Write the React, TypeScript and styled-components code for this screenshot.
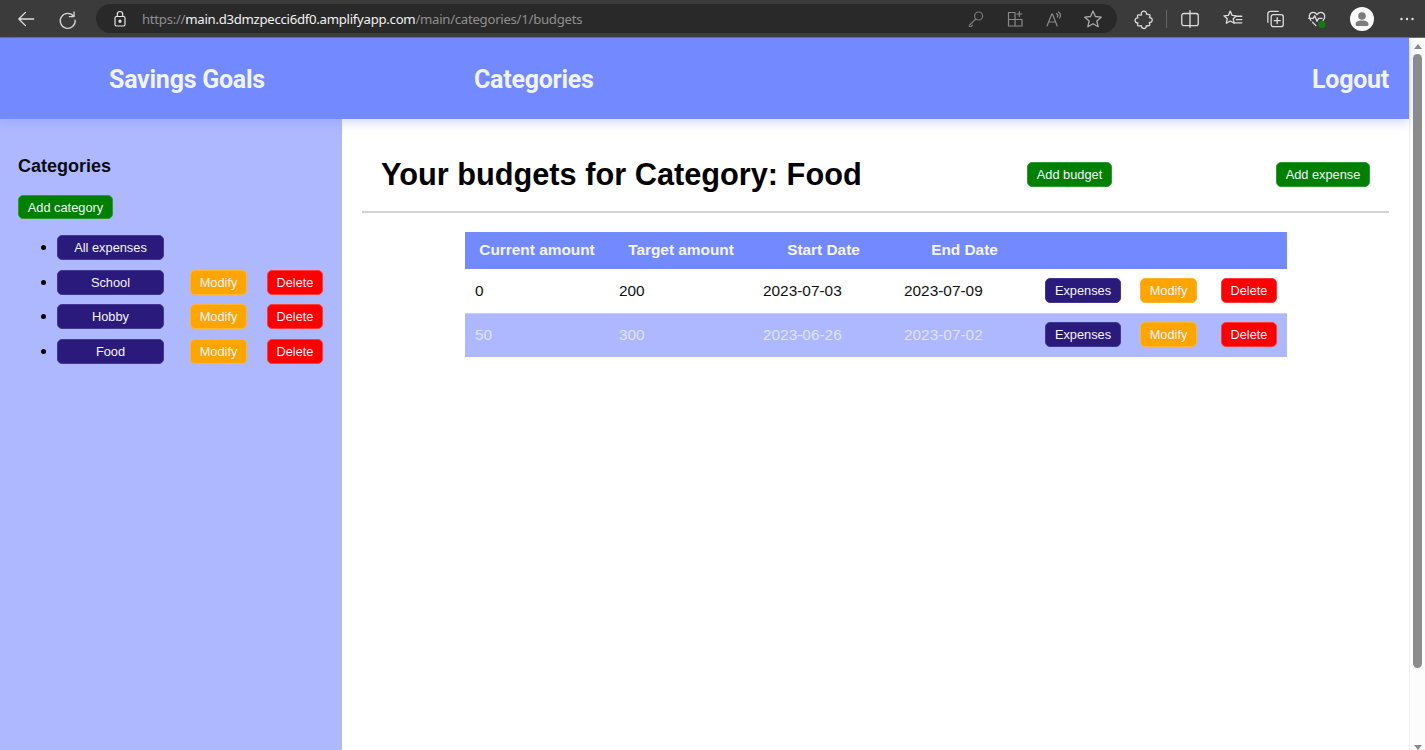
import React from 'react';
import styled, { createGlobalStyle } from 'styled-components';

const GlobalStyle = createGlobalStyle`
  html, body {
    margin: 0;
    height: 100%;
    overflow: hidden;
    background: #fff;
    font-family: "Liberation Sans", Arial, sans-serif;
  }
  #root {
    height: 100%;
  }
`;

const Window = styled.div`
  height: 750px;
  display: flex;
  flex-direction: column;
`;

const BrowserBar = styled.div`
  height: 37px;
  flex: none;
  display: flex;
  align-items: center;
  background: #3b3b3b;
  border-bottom: 1px solid #6b6b6b;
  box-sizing: content-box;
`;

const IconSlot = styled.span<{ $left?: number }>`
  width: 24px;
  height: 24px;
  flex: none;
  display: flex;
  align-items: center;
  justify-content: center;
  margin-left: ${({ $left }) => $left ?? 0}px;
  svg {
    display: block;
  }
`;

const UrlPill = styled.div`
  width: 1021px;
  height: 29px;
  flex: none;
  margin-left: 16px;
  display: flex;
  align-items: center;
  border-radius: 15px;
  background: #292929;
  box-sizing: border-box;
  padding-left: 14px;
`;

const UrlText = styled.span`
  margin-left: 12px;
  font-family: "Noto Sans", "Open Sans", sans-serif;
  font-size: 13.2px;
  letter-spacing: -0.28px;
  color: #8f8f8f;
  white-space: nowrap;
  b {
    font-weight: 400;
    color: #f2f2f2;
  }
`;

const UrlIcons = styled.div`
  margin-left: auto;
  margin-right: 12px;
  display: flex;
  gap: 15px;
`;

const Divider = styled.span`
  width: 1px;
  height: 18px;
  flex: none;
  margin: 0 11px 0 10px;
  background: #666;
`;

const Viewport = styled.div`
  flex: 1;
  min-height: 0;
  display: flex;
`;

const Page = styled.div`
  flex: 1;
  min-width: 0;
  display: flex;
  flex-direction: column;
`;

const Scrollbar = styled.div`
  width: 16px;
  flex: none;
  display: flex;
  flex-direction: column;
  align-items: center;
  background: #fcfcfc;
  border-left: 1px solid #f0f0f0;
  box-sizing: border-box;
`;

const ScrollArrow = styled.span<{ $down?: boolean }>`
  width: 0;
  height: 0;
  flex: none;
  margin: ${({ $down }) => ($down ? '5px 0 0' : '6px 0 5px')};
  border-left: 4px solid transparent;
  border-right: 4px solid transparent;
  ${({ $down }) =>
    $down ? 'border-top: 5px solid #8a8a8a;' : 'border-bottom: 5px solid #8a8a8a;'}
`;

const ScrollThumb = styled.span`
  width: 9px;
  height: 614px;
  flex: none;
  margin-bottom: auto;
  border-radius: 5px;
  background: #8c8c8c;
`;

const Nav = styled.nav`
  height: 81px;
  flex: none;
  position: relative;
  z-index: 1;
  display: flex;
  align-items: center;
  padding: 2px 20px 0 109px;
  box-sizing: border-box;
  background: #7389ff;
  box-shadow: 0 4px 10px rgba(115, 137, 255, 0.3);
`;

const NavLink = styled.a<{ $left?: string }>`
  font-family: Roboto, sans-serif;
  font-weight: 700;
  font-size: 25px;
  letter-spacing: -0.25px;
  color: #f1f3ff;
  margin-left: ${({ $left }) => $left ?? '0'};
`;

const Body = styled.div`
  flex: 1;
  min-height: 0;
  display: flex;
`;

const Sidebar = styled.aside`
  width: 342px;
  flex: none;
  box-sizing: border-box;
  padding: 36px 0 0 18px;
  background: #aeb8ff;
`;

const SideTitle = styled.h3`
  margin: 0 0 18px;
  font-size: 18px;
  line-height: 22px;
  font-weight: 700;
  color: #0b0b14;
`;

const Btn = styled.button<{ $kind: 'green' | 'navy' | 'orange' | 'red'; $w: number; $h?: number }>`
  display: block;
  width: ${({ $w }) => $w}px;
  height: ${({ $h }) => $h ?? 25}px;
  flex: none;
  padding: 0;
  box-sizing: border-box;
  border: 1px solid
    ${({ $kind }) =>
      ({ green: '#2f9a2f', navy: '#43378f', orange: '#ffb52e', red: '#ff3b3b' })[$kind]};
  border-radius: 5px;
  font-family: "Liberation Sans", Arial, sans-serif;
  font-size: 12.8px;
  color: #f4f4ff;
  background: ${({ $kind }) =>
    ({ green: '#008000', navy: '#2a1a7c', orange: '#ffa500', red: '#ff0000' })[$kind]};
`;

const CatList = styled.ul`
  margin: 16px 0 0;
  padding: 0 0 0 39px;
  list-style: disc;
  font-size: 15.4px;
  color: #000;
`;

const CatItem = styled.li`
  height: 25px;
  margin-bottom: 9.6px;
`;

const CatRow = styled.div`
  display: flex;
  align-items: center;
  height: 25px;
`;

const CatActions = styled.div`
  display: flex;
  margin-left: 26px;
  gap: 20px;
`;

const Main = styled.main`
  flex: 1;
  min-width: 0;
  padding: 0 20px;
`;

const Header = styled.header`
  height: 94px;
  display: flex;
  align-items: center;
  padding: 18px 19px 0;
  box-sizing: border-box;
  border-bottom: 2px solid #d3d3d3;
`;

const Title = styled.h1`
  margin: 0;
  width: 646px;
  flex: none;
  font-size: 30.72px;
  font-weight: 700;
  line-height: 37px;
  color: #000;
`;

const HeaderBtnGap = styled.div`
  flex: 1;
`;

const BudgetTable = styled.table`
  width: 822px;
  margin: 19px 0 0 103px;
  border-collapse: collapse;
  table-layout: fixed;
  font-size: 15.4px;
`;

const Col = styled.col<{ $w: number }>`
  width: ${({ $w }) => $w}px;
`;

const HeadRow = styled.tr`
  height: 37px;
  background: #7389ff;
`;

const HeadCell = styled.th`
  padding: 0;
  text-align: center;
  font-weight: 700;
  color: #f3f5ff;
`;

const Row = styled.tr<{ $alt?: boolean }>`
  height: 44px;
  background: ${({ $alt }) => ($alt ? '#aeb8ff' : '#fff')};
  color: ${({ $alt }) => ($alt ? '#dfe3ff' : '#111')};
  border-top: 1px solid ${({ $alt }) => ($alt ? '#c5cdff' : '#fff')};
`;

const Cell = styled.td`
  padding: 0 0 0 10px;
`;

const ActionCell = styled.td`
  padding: 0 0 2px 10px;
`;

const Stroke = ({ size = 20, color = '#a0a0a0', children }: { size?: number; color?: string; children: React.ReactNode }) => (
  <svg width={size} height={size} viewBox="0 0 20 20" fill="none" stroke={color} strokeWidth="1.2" strokeLinecap="round" strokeLinejoin="round" aria-hidden>
    {children}
  </svg>
);

const categories = ['School', 'Hobby', 'Food'];

const budgets = [
  { current: 0, target: 200, start: '2023-07-03', end: '2023-07-09' },
  { current: 50, target: 300, start: '2023-06-26', end: '2023-07-02' },
];

export default function App() {
  return (
    <Window>
      <GlobalStyle />
      <BrowserBar>
        <IconSlot $left={14}>
          <Stroke size={22} color="#e0e0e0">
            <path d="M17 10H3.5M9.5 4l-6 6 6 6" />
          </Stroke>
        </IconSlot>
        <IconSlot $left={18}>
          <Stroke size={22} color="#d4d4d4">
            <path d="M15.5 3.500v4.300h-4.300M15.300 7.800a6.800 6.800 0 1 0 1.200 3.200" />
          </Stroke>
        </IconSlot>
        <UrlPill>
          <Stroke size={20} color="#e6e6e6">
            <rect x="5" y="7.5" width="10" height="9.5" rx="1.5" />
            <path d="M7.3 7.5V5.2a2.7 2.7 0 0 1 5.4 0v2.3" />
            <circle cx="10" cy="12.2" r="1" fill="#e6e6e6" />
          </Stroke>
          <UrlText>
            https://<b>main.d3dmzpecci6df0.amplifyapp.com</b>/main/categories/1/budgets
          </UrlText>
          <UrlIcons>
            <IconSlot>
              <Stroke color="#7a7a7a">
                <circle cx="12.6" cy="7" r="4" />
                <path d="M9.800 10L3.400 16.200v1.300h1.800l1.400-1.400" />
              </Stroke>
            </IconSlot>
            <IconSlot>
              <Stroke color="#8a8a8a">
                <path d="M10 3.500H3.500v13.500H17v-6.500H3.500M10 3.500V17M14.300 2.500v5M11.800 5h5" />
              </Stroke>
            </IconSlot>
            <IconSlot>
              <Stroke color="#8a8a8a">
                <path d="M3 17L7.800 5h.6L13.200 17M4.800 13h6.800M12.500 4.500c1.200.8 1.500 2.400.8 3.500M14.500 3c2 1.600 2.300 4 1.200 6" />
              </Stroke>
            </IconSlot>
            <IconSlot>
              <Stroke size={22} color="#a8a8a8">
                <path d="M10 2.8l2.2 4.9 5.3.6-4 3.5 1.2 5.200-4.700-2.700L5.300 17l1.200-5.200-4-3.500 5.300-.6z" />
              </Stroke>
            </IconSlot>
          </UrlIcons>
        </UrlPill>
        <IconSlot $left={15}>
          <Stroke size={22} color="#dcdcdc">
            <path d="M7.500 5.500c-.3-3.500 5-3.500 4.800 0 0 .5 2.800-.2 3.200 1 .4 1-.8 2-.6 2.200 3.400-.3 3.400 4.800 0 4.500-.3 0 .8 2 .2 2.600-.8.800-2.800 0-3 .4.300 3.200-4.800 3.300-4.600 0 0-.4-2.400.6-3.200-.2-.7-.7.400-2.300.1-2.500-3.300.3-3.300-4.800-.1-4.500.3 0-.7-1.900 0-2.600.7-.7 3 .3 3.200.1z" />
          </Stroke>
        </IconSlot>
        <Divider />
        <IconSlot>
          <Stroke size={22} color="#dcdcdc">
            <rect x="2.500" y="5" width="15" height="11" rx="2" />
            <path d="M10 2.500v15" />
          </Stroke>
        </IconSlot>
        <IconSlot $left={19}>
          <Stroke size={22} color="#dcdcdc">
            <path d="M7.500 2.800l1.700 3.900 4 .4-3 2.700.9 4.100-3.600-2.100-3.600 2.100.9-4.100-3-2.700 4-.4zM13.500 7.500h4.500M13 10.500h5M10.500 13.500H18" />
          </Stroke>
        </IconSlot>
        <IconSlot $left={18}>
          <Stroke size={22} color="#dcdcdc">
            <path d="M3.500 13V5.500C3.500 4 4.500 3 6 3h7" />
            <rect x="6.500" y="6" width="11" height="11" rx="2" />
            <path d="M12 8.800v5.400M9.300 11.500h5.400" />
          </Stroke>
        </IconSlot>
        <IconSlot $left={18}>
          <Stroke size={22} color="#dcdcdc">
            <path d="M4.500 11.500C2 9 2.500 4 6.500 4c1.500 0 2.700.8 3.500 2 .8-1.200 2-2 3.500-2 4 0 4.500 5 2 7.500M2.500 9.500h4l1.500-2.500 2 5 1.500-2.500h3M6 13l3 3" />
            <circle cx="14.500" cy="15" r="3.200" fill="#107c10" stroke="none" />
          </Stroke>
        </IconSlot>
        <IconSlot $left={21}>
          <svg width="24" height="24" viewBox="0 0 24 24" aria-hidden>
            <circle cx="12" cy="12" r="12" fill="#fafafa" />
            <circle cx="12" cy="9" r="3.800" fill="#7c7c7c" />
            <path d="M5.500 17.500c0-2.800 2.500-4 6.500-4s6.500 1.200 6.500 4c0 1-1 1.500-2 1.500H7.500c-1 0-2-.5-2-1.500z" fill="#7c7c7c" />
          </svg>
        </IconSlot>
        <IconSlot $left={21}>
          <svg width="16" height="4" viewBox="0 0 16 4" fill="#e4e4e4" aria-hidden>
            <circle cx="2.500" cy="2" r="1.200" />
            <circle cx="8" cy="2" r="1.200" />
            <circle cx="13.500" cy="2" r="1.200" />
          </svg>
        </IconSlot>
      </BrowserBar>
      <Viewport>
        <Page>
          <Nav>
            <NavLink>Savings Goals</NavLink>
            <NavLink $left="209px">Categories</NavLink>
            <NavLink $left="auto">Logout</NavLink>
          </Nav>
          <Body>
            <Sidebar>
              <SideTitle>Categories</SideTitle>
              <Btn $kind="green" $w={95} $h={24}>Add category</Btn>
              <CatList>
                <CatItem>
                  <CatRow>
                    <Btn $kind="navy" $w={107}>All expenses</Btn>
                  </CatRow>
                </CatItem>
                {categories.map((name) => (
                  <CatItem key={name}>
                    <CatRow>
                      <Btn $kind="navy" $w={107}>{name}</Btn>
                      <CatActions>
                        <Btn $kind="orange" $w={57}>Modify</Btn>
                        <Btn $kind="red" $w={56}>Delete</Btn>
                      </CatActions>
                    </CatRow>
                  </CatItem>
                ))}
              </CatList>
            </Sidebar>
            <Main>
              <Header>
                <Title>Your budgets for Category: Food</Title>
                <Btn $kind="green" $w={85}>Add budget</Btn>
                <HeaderBtnGap />
                <Btn $kind="green" $w={94}>Add expense</Btn>
              </Header>
              <BudgetTable>
                <colgroup>
                  <Col $w={144} />
                  <Col $w={144} />
                  <Col $w={141} />
                  <Col $w={141} />
                  <Col $w={95} />
                  <Col $w={81} />
                  <Col $w={76} />
                </colgroup>
                <thead>
                  <HeadRow>
                    <HeadCell>Current amount</HeadCell>
                    <HeadCell>Target amount</HeadCell>
                    <HeadCell>Start Date</HeadCell>
                    <HeadCell>End Date</HeadCell>
                    <HeadCell />
                    <HeadCell />
                    <HeadCell />
                  </HeadRow>
                </thead>
                <tbody>
                  {budgets.map((b, i) => (
                    <Row key={b.start} $alt={i === 1}>
                      <Cell>{b.current}</Cell>
                      <Cell>{b.target}</Cell>
                      <Cell>{b.start}</Cell>
                      <Cell>{b.end}</Cell>
                      <ActionCell><Btn $kind="navy" $w={76}>Expenses</Btn></ActionCell>
                      <ActionCell><Btn $kind="orange" $w={57}>Modify</Btn></ActionCell>
                      <ActionCell><Btn $kind="red" $w={56}>Delete</Btn></ActionCell>
                    </Row>
                  ))}
                </tbody>
              </BudgetTable>
            </Main>
          </Body>
        </Page>
        <Scrollbar>
          <ScrollArrow />
          <ScrollThumb />
          <ScrollArrow $down />
        </Scrollbar>
      </Viewport>
    </Window>
  );
}
